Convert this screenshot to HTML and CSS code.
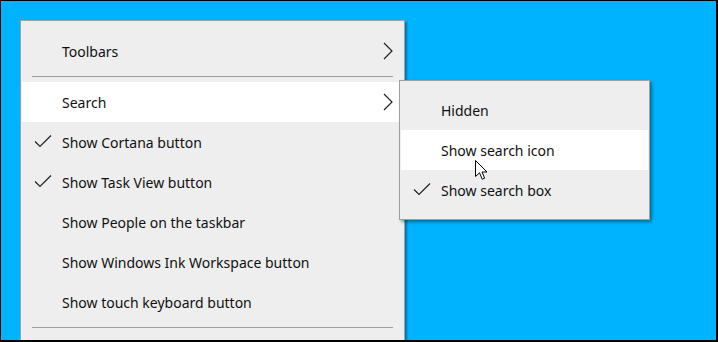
FILE: index.html
```html
<!DOCTYPE html>
<html lang="en">
<head>
  <meta charset="UTF-8" />
  <title>Taskbar context menu</title>
  <link rel="stylesheet" href="styles.css">
</head>
<body>
  <div class="desktop">
    <div class="menu">
      <div class="item">
        <span class="label">Toolbars</span>
        <svg class="chevron" width="10" height="18" viewBox="0 0 10 18"><polyline points="1,1 9,9 1,17" /></svg>
      </div>
      <div class="sep"></div>
      <div class="item hot">
        <span class="label">Search</span>
        <svg class="chevron" width="10" height="18" viewBox="0 0 10 18"><polyline points="1,1 9,9 1,17" /></svg>
      </div>
      <div class="item">
        <svg class="check" width="18" height="14" viewBox="0 0 18 14"><polyline points="1,7.5 6,12.5 17,1.5" /></svg>
        <span class="label">Show Cortana button</span>
      </div>
      <div class="item">
        <svg class="check" width="18" height="14" viewBox="0 0 18 14"><polyline points="1,7.5 6,12.5 17,1.5" /></svg>
        <span class="label">Show Task View button</span>
      </div>
      <div class="item">
        <span class="label">Show People on the taskbar</span>
      </div>
      <div class="item">
        <span class="label">Show Windows Ink Workspace button</span>
      </div>
      <div class="item">
        <span class="label">Show touch keyboard button</span>
      </div>
      <div class="sep"></div>
    </div>

    <div class="submenu">
      <div class="item">
        <span class="label">Hidden</span>
      </div>
      <div class="item hot">
        <span class="label">Show search icon</span>
      </div>
      <div class="item">
        <svg class="check" width="18" height="14" viewBox="0 0 18 14"><polyline points="1,7.5 6,12.5 17,1.5" /></svg>
        <span class="label">Show search box</span>
      </div>
    </div>

    <svg class="cursor" width="13" height="21" viewBox="0 0 13 21">
      <path d="M0.5,0.5 L0.5,16.5 L4.5,12.8 L7.2,19.2 L9.6,18.2 L7,12 L12,12 Z" />
    </svg>
  </div>
</body>
</html>
```

FILE: styles.css
```css
body {
  margin: 0;
  background: #000;
  font-family: 'Noto Sans', 'Open Sans', sans-serif;
}
.desktop {
  position: relative;
  box-sizing: border-box;
  width: 718px;
  height: 342px;
  border: 1px solid #000;
  border-width: 1px 2px 2px 1px;
  background: #00b3fe;
  padding: 19px 0 0 19px;
  overflow: hidden;
}
.menu {
  width: 383px;
  background: #eeeeee;
  border: 1px solid #a0a0a0;
  padding: 10px 0 20px;
  box-shadow: 2px 2px 2px rgba(0, 0, 0, 0.35);
}
.item {
  position: relative;
  height: 40px;
  margin: 0 1px;
  display: flex;
  align-items: center;
  color: #111;
  font-size: 14px;
}
.item .label {
  margin-left: 40px;
}
.hot {
  background: #fff;
}
.sep {
  height: 1px;
  background: #a0a0a0;
  margin: 5px 11px;
}
.chevron {
  position: absolute;
  right: 10px;
  top: 11px;
  fill: none;
  stroke: #222;
  stroke-width: 1.2;
}
.check {
  position: absolute;
  left: 12px;
  top: 12px;
  fill: none;
  stroke: #222;
  stroke-width: 1.2;
}
.submenu {
  position: absolute;
  left: 398px;
  top: 79px;
  width: 249px;
  background: #eeeeee;
  border: 1px solid #a0a0a0;
  padding: 9px 0;
  box-shadow: 2px 2px 3px rgba(0, 0, 0, 0.4);
}
.cursor {
  position: absolute;
  left: 474px;
  top: 159px;
  fill: #fff;
  stroke: #000;
  stroke-width: 1;
}
```
